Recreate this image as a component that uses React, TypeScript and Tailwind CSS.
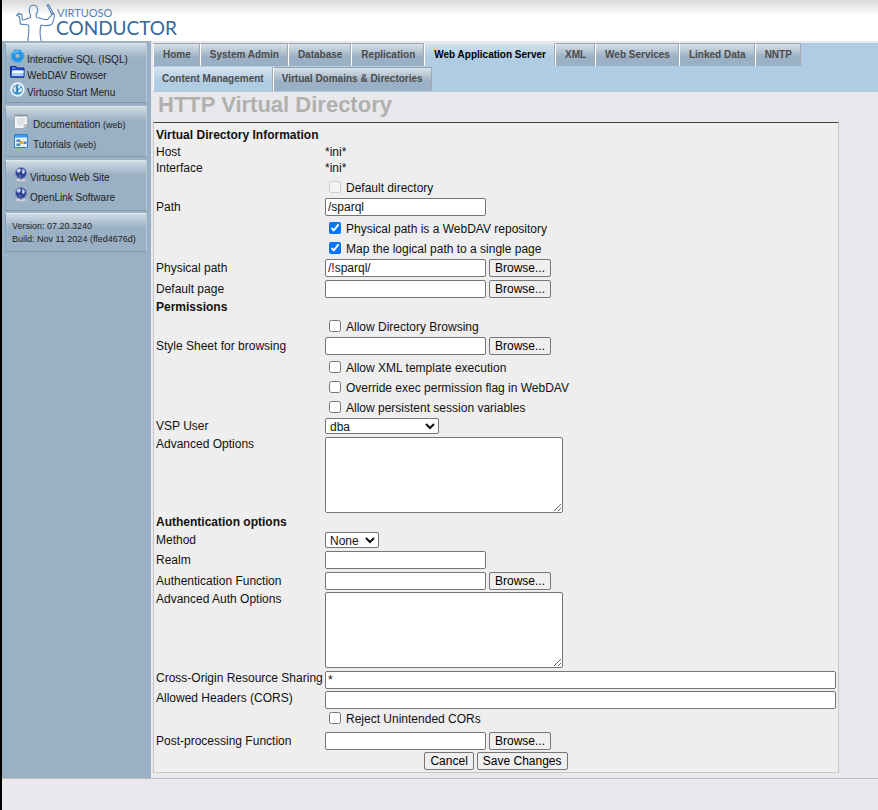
import React from "react";

const tabs = ["Home", "System Admin", "Database", "Replication", "Web Application Server", "XML", "Web Services", "Linked Data", "NNTP"];
const subTabs = ["Content Management", "Virtual Domains & Directories"];

const controlBox = "box-border rounded-[2px] border border-[#767676] bg-white";

function Tab({ label, active, strong, tall }: { label: string; active?: boolean; strong?: boolean; tall?: boolean }) {
  const shade = active
    ? "border-t-[#dbe7f2] bg-linear-to-b from-[#d3e2ef] to-[#b0cce2] to-60%"
    : "border-t-[#93a5b5] bg-linear-to-b from-[#d9e1e6] to-[#9ab0c4] to-60%";
  return (
    <a
      href="#"
      className={`block whitespace-nowrap border-x border-t border-l-white border-r-[#a3a9ae] text-[10px] font-bold leading-[22px] ${shade} ${tall ? "h-6 px-2" : "h-[23px] pl-[9px] pr-2"} ${strong ? "text-black" : "text-[#4b4b4b]"}`}
    >
      {label}
    </a>
  );
}

function Block({ children, className }: { children: React.ReactNode; className: string }) {
  return (
    <section className={`border border-[#7f98ab] border-t-[#dfe8ee] border-l-[#86a0b4] border-r-[#b4c9da] bg-[#9ab0c4] bg-linear-to-b from-[#d0dce4] to-[#9ab0c4] to-[14px] ${className}`}>
      {children}
    </section>
  );
}

function Item({ icon, className, children }: { icon: React.ReactNode; className: string; children: React.ReactNode }) {
  return (
    <a href="#" className={`flex items-start whitespace-nowrap leading-4 ${className}`}>
      {icon}
      <span className="pt-[3px]">{children}</span>
    </a>
  );
}

function Row({ label, id, className = "h-[21px] pt-px", labelClass = "leading-[18px]", children }: { label?: string; id?: string; className?: string; labelClass?: string; children?: React.ReactNode }) {
  return (
    <div className={`grid grid-cols-[169px_1fr] items-start ${className}`}>
      {id ? <label htmlFor={id} className={labelClass}>{label}</label> : <span>{label}</span>}
      <div className="flex items-start gap-[3px]">{children}</div>
    </div>
  );
}

function Heading({ children }: { children: string }) {
  return <h2 className="h-4 font-bold leading-[14px]">{children}</h2>;
}

function Field({ label, id, value = "", browse, className }: { label: string; id: string; value?: string; browse?: boolean; className?: string }) {
  return (
    <Row label={label} id={id} className={className}>
      <input id={id} type="text" defaultValue={value} className={`h-[18px] w-[161px] px-0.5 ${controlBox}`} />
      {browse && <Button>Browse...</Button>}
    </Row>
  );
}

function WideField({ label, id, value = "" }: { label: string; id: string; value?: string }) {
  return (
    <Row label={label} id={id} className="h-5 pt-px" labelClass="leading-[14px]">
      <input id={id} type="text" defaultValue={value} className={`h-[18px] w-full px-0.5 ${controlBox}`} />
    </Row>
  );
}

function Check({ label, checked, disabled, className = "h-5", boxHeight = "h-5" }: { label: string; checked?: boolean; disabled?: boolean; className?: string; boxHeight?: string }) {
  return (
    <Row className={className}>
      <label className={`flex items-center gap-[5px] pl-1 ${boxHeight}`}>
        <input type="checkbox" defaultChecked={checked} disabled={disabled} className="size-3" />
        <span className="pt-0.5 leading-4">{label}</span>
      </label>
    </Row>
  );
}

function Button({ children }: { children: string }) {
  return (
    <button type="button" className="h-[18px] rounded-[2px] border border-[#767676] bg-[#efefef] px-[5px] leading-4 text-black">
      {children}
    </button>
  );
}

function Area({ label, id }: { label: string; id: string }) {
  return (
    <Row label={label} id={id} className="h-[79px] pt-px" labelClass="leading-[14px]">
      <textarea id={id} className={`block h-[76px] w-[238px] resize p-[2px] ${controlBox}`} />
    </Row>
  );
}

function Logo() {
  return (
    <svg viewBox="0 0 170 41" className="block h-[41px] w-[170px]" role="img" aria-label="Virtuoso Conductor">
      <g fill="none" stroke="#5583b3" strokeWidth="1.1" strokeLinejoin="round" strokeLinecap="round">
        <path d="M11.500 42C12.500 36 13.500 31 12.500 25C10 24 7 25 4.500 24C3.500 21 4.500 18 3 16.500L.5 15L2 14.500L2.500 13L4 14.500L5.500 14C6.500 16 5.500 18 6.500 20C9 20.500 11 18 14.500 17.500L14.500 14.500C12.500 12 12.500 5.500 17.500 5C22.500 5.500 22.500 12 20 14.500L20.500 17.500C24 17.500 27 20.500 31.500 19.500C33 18.500 33 17 34.500 16.500L36.500 13.500L38.500 14.500C38 17 38 22 35.500 24.500C32 26 29 26 25 25C23.500 31 24 37 25.500 42" />
        <path d="M31 5l1.500 -.5l5 9l-1.500 1z" />
      </g>
      <text x="41" y="17" fontSize="11" fill="#5583b3" fontFamily="Lato, sans-serif">VIRTUOSO</text>
      <text x="40" y="35" fontSize="19" fill="#34679d" fontFamily="Lato, sans-serif">CONDUCTOR</text>
    </svg>
  );
}

const iconBox = "block size-[15px] shrink-0";

function Gear() {
  return (
    <svg viewBox="0 0 15 15" className={iconBox}>
      <circle cx="7.500" cy="7" r="4" fill="none" stroke="#1e90e8" strokeWidth="3.400" />
      <circle cx="7.500" cy="7" r="5.800" fill="none" stroke="#2fa0f0" strokeWidth="2" strokeDasharray="3.200 1.350" />
      <path d="M3.500 5a4.500 4.500 0 0 1 5.500-2" fill="none" stroke="#6ec6fb" strokeWidth="1.400" />
    </svg>
  );
}

function Folder() {
  return (
    <svg viewBox="0 0 15 15" className={iconBox}>
      <path d="M.5 12V1.500H6l1 1.500h7V12z" fill="#1d49cf" stroke="#0d2b9b" />
      <path d="M2 3h3.500" stroke="#8fb5ff" />
      <path d="M1.500 11.500l.5-6H13.500v6z" fill="#a9ccff" />
      <path d="M2.500 5.500H13.500v2.500H2.500z" fill="#f4f9ff" />
      <path d="M1 12h13" stroke="#0d2b9b" />
    </svg>
  );
}

function StartGlobe() {
  return (
    <svg viewBox="0 0 15 15" className={iconBox}>
      <circle cx="7.500" cy="7.500" r="7.200" fill="#f1f7fb" />
      <circle cx="7.500" cy="7.500" r="5.300" fill="#3b8cbf" />
      <path d="M3 6l3-3l-.5 3l1 2l-1.500 3zM8 3l3 1l-2 3l3-1v3l-3 2l-1-2z" fill="#d8ecf6" />
      <circle cx="8" cy="7.500" r="1" fill="#1b6491" />
    </svg>
  );
}

function Page() {
  return (
    <svg viewBox="0 0 15 15" className={iconBox}>
      <path d="M.5.5h13v10l-3.500 4H.5z" fill="#f4f5f6" stroke="#a7acb2" />
      <path d="M1 1h12v1.500H1z" fill="#8e9aab" />
      <path d="M3 5h8M3 7h8M3 9h7M3 11h5" stroke="#c3c8ce" strokeWidth=".8" />
      <path d="M10 14.500v-4h3.500z" fill="#cdd1d6" stroke="#a7acb2" strokeWidth=".6" />
    </svg>
  );
}

function Tutorial() {
  return (
    <svg viewBox="0 0 15 15" className={iconBox}>
      <path d="M.5.5h13v13H.5z" fill="#e3effa" stroke="#2f7fcb" />
      <path d="M1 1h12v2.500H1z" fill="#3aa0ee" />
      <path d="M2.500 5.500h3.500v2.500h-3.500zM2.500 9.500h3.500v2.500h-3.500zM9.500 7.500h3v2.500h-3z" fill="#4a83c9" />
      <path d="M6 6l4 2.500L6 11z" fill="#f0a31c" />
    </svg>
  );
}

function Globe() {
  return (
    <svg viewBox="0 0 15 15" className={iconBox}>
      <ellipse cx="7" cy="13" rx="5" ry="1.300" fill="#d0d4d9" />
      <path d="M6 11h2v2h-2z" fill="#8d959f" />
      <circle cx="7" cy="6" r="5.500" fill="#2c4390" stroke="#7787b8" strokeWidth=".8" />
      <path d="M2.500 3l3-1.500l1.500 1l-1 2.500l-2 1zM8.500 1.500l2.500 2.500l-1 3l-2-1z" fill="#c9d6ee" />
      <path d="M5 8l2 .5l-1 2z" fill="#8ea3d2" />
    </svg>
  );
}

export default function App() {
  return (
    <div className="min-h-screen border-l-2 border-black bg-[#e9e8ed] font-['Liberation_Sans',Arial,sans-serif] text-xs text-[#111]">
      <header className="h-[41px] bg-white bg-linear-to-b from-[#d9d9d9] to-white to-[16px] pl-[14px]">
        <Logo />
      </header>
      <div className="flex border-b border-[#bdbdc2]">
        <nav className="w-[149px] shrink-0 bg-[#9ab0c4] pl-[3px] pr-1 pt-0.5 text-[10px] text-[#222]">
          <Block className="h-[60px] pl-1 pt-[5px]">
            <Item icon={<Gear />} className="h-4 gap-0.5">Interactive SQL (ISQL)</Item>
            <Item icon={<Folder />} className="h-[17px] gap-0.5">WebDAV Browser</Item>
            <Item icon={<StartGlobe />} className="h-4 gap-0.5">Virtuoso Start Menu</Item>
          </Block>
          <Block className="mt-[3px] h-[51px] pl-2 pt-[7px]">
            <Item icon={<Page />} className="h-5 gap-1">Documentation <span className="text-[9px]">(web)</span></Item>
            <Item icon={<Tutorial />} className="h-5 gap-1">Tutorials <span className="text-[9px]">(web)</span></Item>
          </Block>
          <Block className="mt-[3px] h-[51px] pl-2 pt-[6px]">
            <Item icon={<Globe />} className="h-5 gap-px">Virtuoso Web Site</Item>
            <Item icon={<Globe />} className="h-5 gap-px">OpenLink Software</Item>
          </Block>
          <Block className="mt-0.5 h-[39px] pl-[6px] pt-[6px] text-[9px] leading-[13px]">
            <p>Version: 07.20.3240</p>
            <p>Build: Nov 11 2024 (ffed4676d)</p>
          </Block>
        </nav>
        <main className="min-w-0 flex-1 pb-[5px] pl-0.5 pt-0.5">
          <div className="h-[49px] bg-[#b0cce2]">
            <div className="flex">{tabs.map((t, i) => <Tab key={t} label={t} active={i === 4} strong={i === 4} />)}</div>
            <div className="flex pt-px">{subTabs.map((t, i) => <Tab key={t} label={t} active={i === 0} tall />)}</div>
          </div>
          <h1 className="h-[30px] pl-[5px] text-[22px] font-bold leading-[26px] text-[#b0b0ad]">HTTP Virtual Directory</h1>
          <form className="mr-[39px] border border-[#c6c6c8] border-t-[#444] bg-[#eee] px-0.5 pb-0.5 pt-[5px]">
            <Heading>Virtual Directory Information</Heading>
            <Row label="Host" className="h-4 leading-4"><span>*ini*</span></Row>
            <Row label="Interface" className="h-[17px] leading-4"><span>*ini*</span></Row>
            <Check label="Default directory" disabled />
            <Field label="Path" id="path" value="/sparql" />
            <Check label="Physical path is a WebDAV repository" checked />
            <Check label="Map the logical path to a single page" checked />
            <Field label="Physical path" id="physical" value="/!sparql/" browse />
            <Field label="Default page" id="default-page" browse />
            <Heading>Permissions</Heading>
            <Check label="Allow Directory Browsing" />
            <Field label="Style Sheet for browsing" id="stylesheet" browse />
            <Check label="Allow XML template execution" />
            <Check label="Override exec permission flag in WebDAV" />
            <Check label="Allow persistent session variables" />
            <Row label="VSP User" id="vsp-user" className="h-[19px] pt-px" labelClass="leading-4">
              <select id="vsp-user" className={`h-4 w-[114px] leading-[14px] ${controlBox}`}><option>dba</option></select>
            </Row>
            <Area label="Advanced Options" id="advanced" />
            <Heading>Authentication options</Heading>
            <Row label="Method" id="method" className="h-[19px] pt-px" labelClass="leading-4">
              <select id="method" className={`h-4 w-[54px] leading-[14px] ${controlBox}`}><option>None</option></select>
            </Row>
            <Field label="Realm" id="realm" />
            <Field label="Authentication Function" id="auth-fn" className="h-5 pt-px" browse />
            <Area label="Advanced Auth Options" id="auth-options" />
            <WideField label="Cross-Origin Resource Sharing" id="cors" value="*" />
            <WideField label="Allowed Headers (CORS)" id="headers" />
            <Check label="Reject Unintended CORs" className="h-[21px]" boxHeight="h-4" />
            <Field label="Post-processing Function" id="post-fn" browse />
            <div className="flex justify-center gap-[3px]"><Button>Cancel</Button><Button>Save Changes</Button></div>
          </form>
        </main>
      </div>
    </div>
  );
}
